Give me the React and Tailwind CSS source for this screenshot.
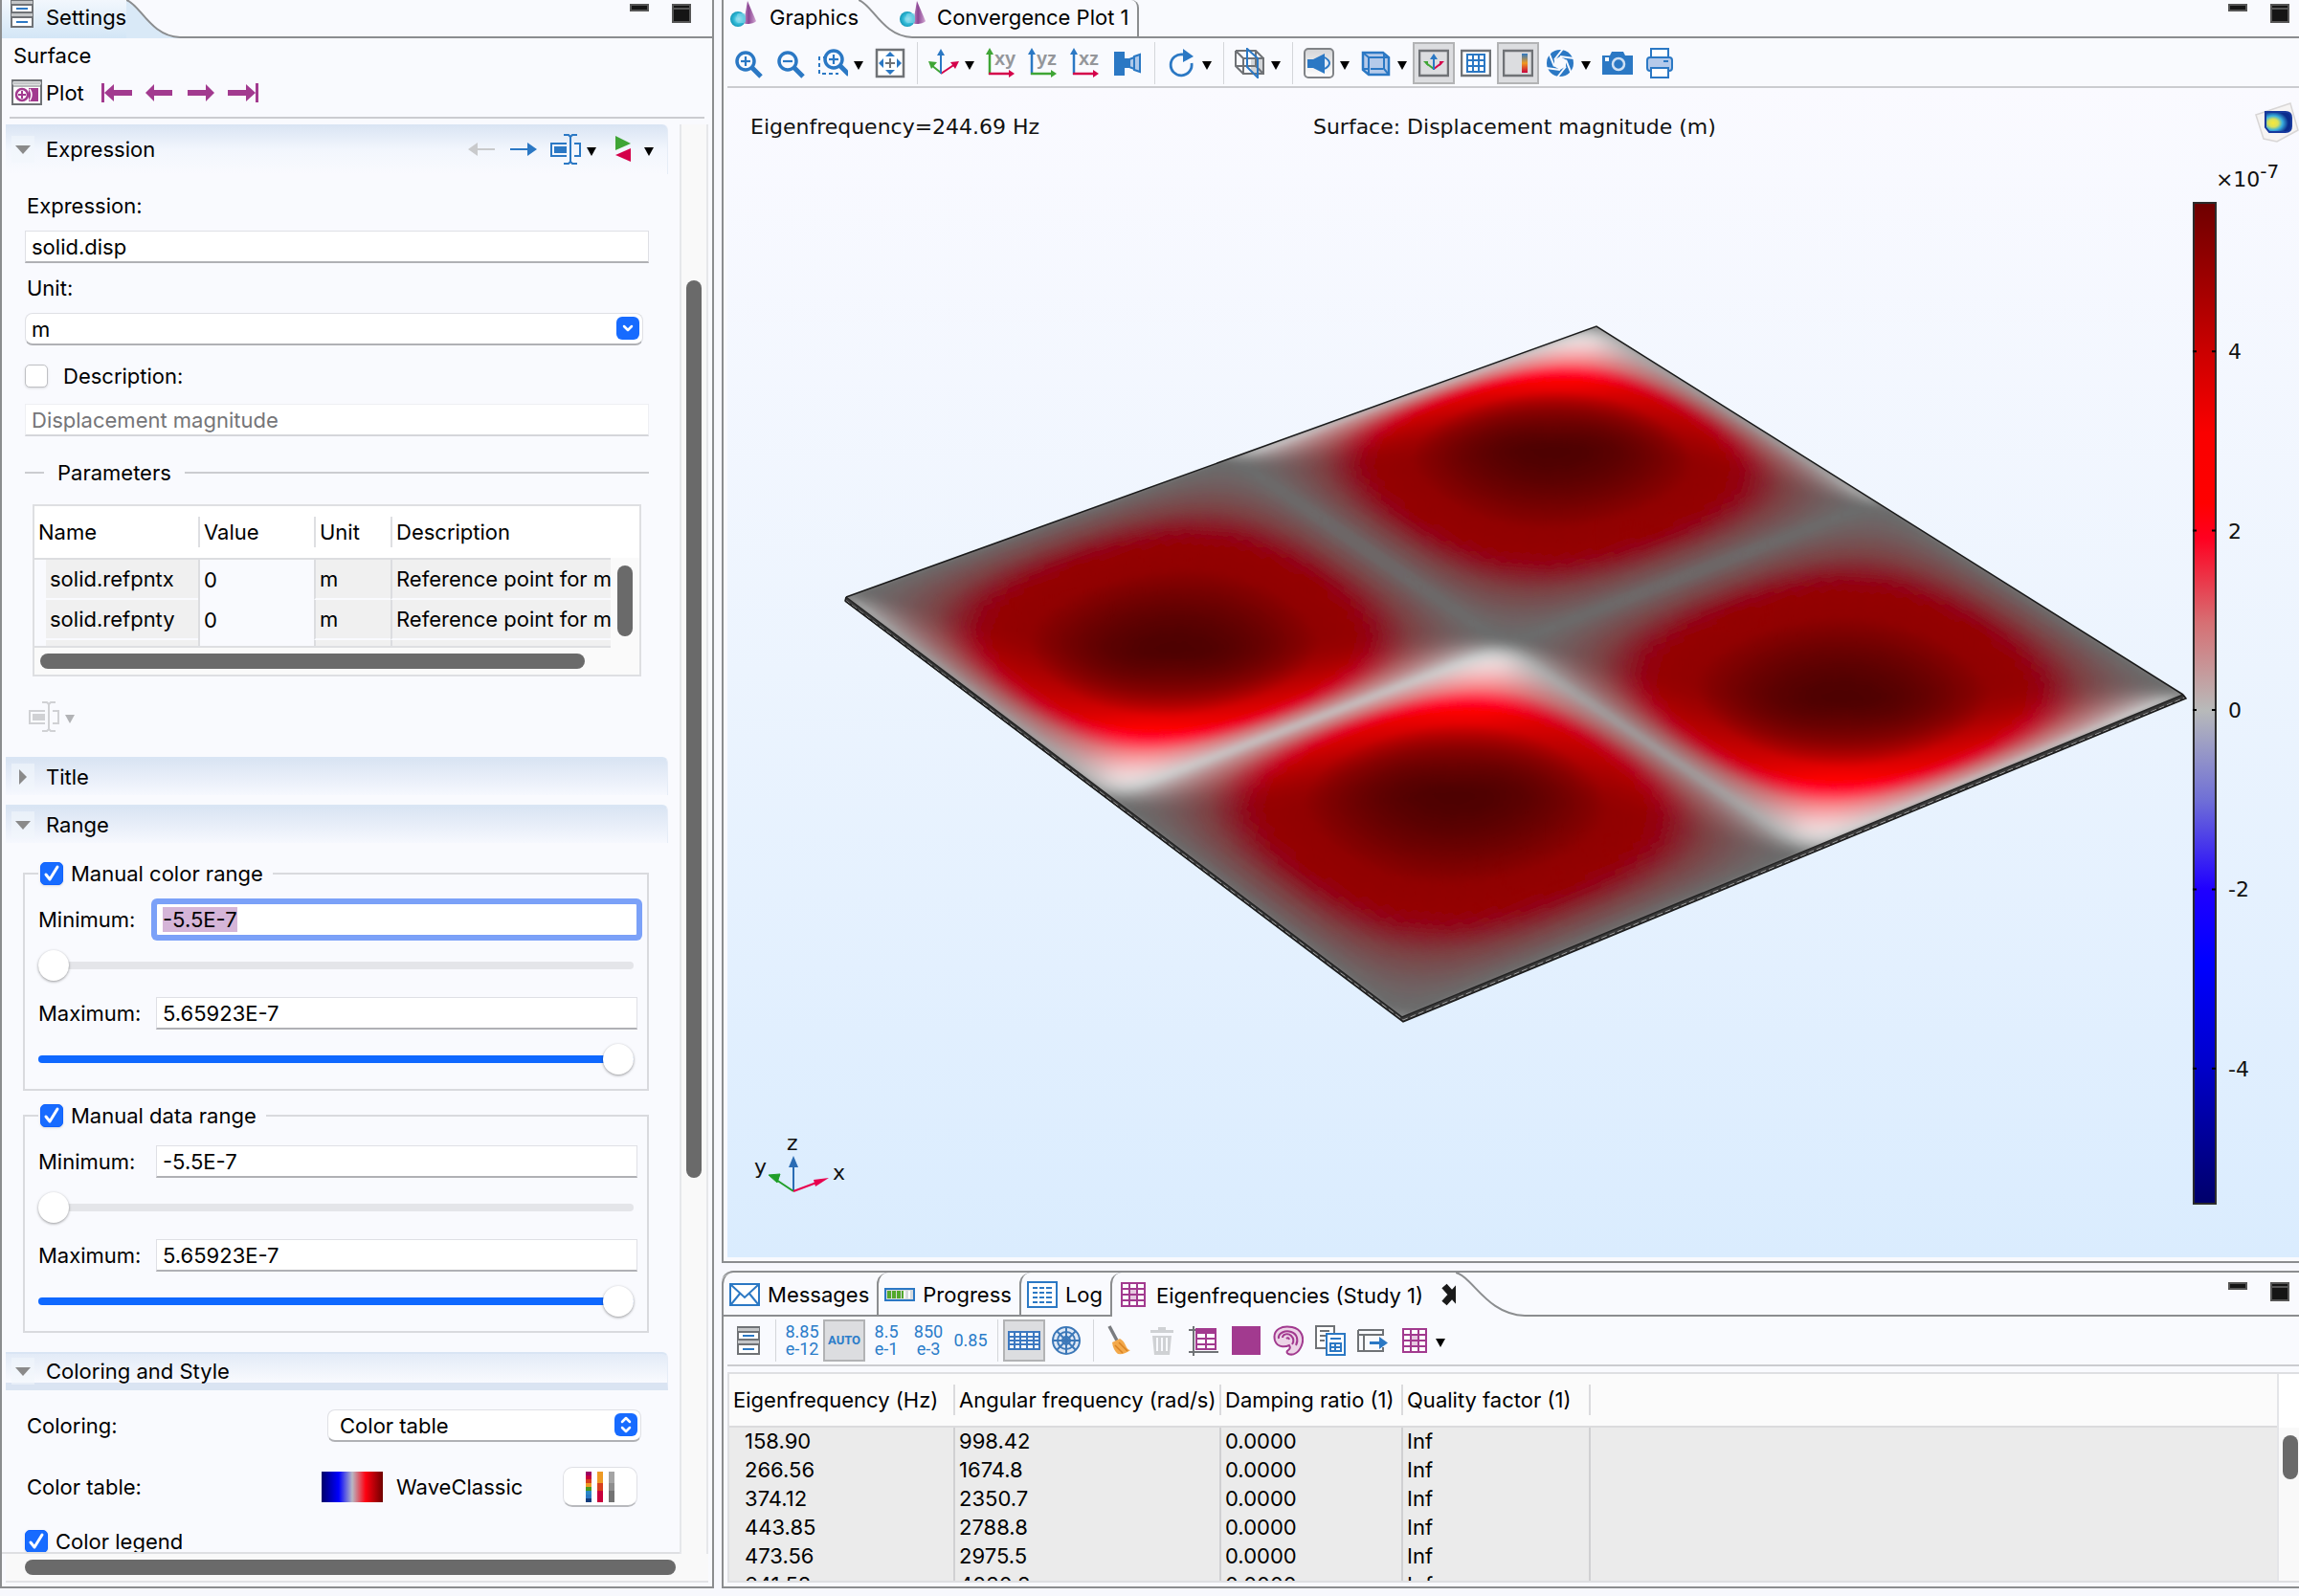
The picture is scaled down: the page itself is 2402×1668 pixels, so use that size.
import { useEffect, useMemo, useRef, useState } from 'react';

const BLUE = '#2b78c4';
const PURPLE = '#a23a8f';
const GREEN = '#3fa535';
const CRIMSON = '#d4004a';
const GRAY = '#6f7276';

function Icon({ w = 32, h = 32, children }) {
  return (
    <svg width={w} height={h} viewBox={`0 0 ${w} ${h}`} fill="none" aria-hidden="true" className="shrink-0">
      {children}
    </svg>
  );
}

/* ---------- shared icons ---------- */

function DrawerIcon() {
  return (
    <Icon w={26} h={32}>
      <rect x="2" y="2" width="22" height="28" fill="#fff" stroke={GRAY} strokeWidth="2" />
      <path d="M2 3h22v4H2zM2 15h22v5H2z" fill="#c4c6c8" />
      <path d="M1 2h24M1 7h24M1 15h24M1 20h24M1 30h24" stroke={GRAY} strokeWidth="2" />
      <path d="M7 11h12M7 25h12" stroke={BLUE} strokeWidth="2" />
    </Icon>
  );
}

function GraphicsIcon() {
  return (
    <Icon w={30} h={30}>
      <defs>
        <linearGradient id="cone" x1="0" x2="1">
          <stop offset="0" stopColor="#c48fc6" />
          <stop offset="0.4" stopColor="#8b4593" />
          <stop offset="1" stopColor="#d3a9d4" />
        </linearGradient>
        <radialGradient id="ball" cx="0.55" cy="0.5" r="0.6">
          <stop offset="0" stopColor="#d5f4fb" />
          <stop offset="0.5" stopColor="#35bcd9" />
          <stop offset="1" stopColor="#0a8eae" />
        </radialGradient>
      </defs>
      <path d="M19 1l9 21c-2 3-11 4-13 2z" fill="url(#cone)" />
      <circle cx="9" cy="20" r="8" fill="url(#ball)" />
      <rect x="8" y="14" width="9" height="10" rx="2" fill="#7fd6e8" opacity="0.7" />
    </Icon>
  );
}

function PlotIcon() {
  return (
    <Icon w={32} h={28}>
      <rect x="1" y="1" width="30" height="25" fill="#fff" stroke={GRAY} strokeWidth="2" />
      <path d="M1 4h30" stroke="#c4c6c8" strokeWidth="3" />
      <path d="M1 7h30" stroke={GRAY} strokeWidth="1" />
      <path d="M18 9h10v14H18z" fill={PURPLE} />
      <circle cx="11" cy="16" r="6" fill="#fff" stroke={PURPLE} strokeWidth="2.5" />
      <path d="M7 16h8M11 12v8" stroke={PURPLE} strokeWidth="2" />
      <path d="M19 10q4 6 0 12" stroke="#fff" strokeWidth="1.5" />
    </Icon>
  );
}

function StepIcon({ flip, bar }) {
  return (
    <Icon w={32} h={20}>
      <g transform={flip ? 'matrix(-1 0 0 1 32 0)' : undefined} fill={PURPLE}>
        <path d={bar ? 'M0 7h20v6H0z' : 'M2 7h20v6H2z'} />
        <path d={bar ? 'M19 1l10 9-10 9z' : 'M21 1l9 9-9 9z'} />
        {bar && <path d="M29 0h3v20h-3z" />}
      </g>
    </Icon>
  );
}

function ThinArrow({ flip, color }) {
  return (
    <Icon w={28} h={20}>
      <g transform={flip ? 'matrix(-1 0 0 1 28 0)' : undefined} fill={color}>
        <path d="M0 9h20v2H0z" />
        <path d="M18 3l10 7-10 7z" />
      </g>
    </Icon>
  );
}

function InsertIcon({ color }) {
  return (
    <Icon>
      <path d="M17 10H1v13h16M25 10h6v13h-6" stroke={color} strokeWidth="2" />
      <path d="M4 13h13v7H4z" fill={color} />
      <path d="M21 2v28M14 1h5l2 2 2-2h5M14 31h5l2-2 2 2h5" stroke={color} strokeWidth="2" />
    </Icon>
  );
}

function SwapIcon() {
  return (
    <Icon w={20} h={28}>
      <path d="M2 0l16 8-16 7z" fill={GREEN} />
      <path d="M18 13v14L2 20z" fill={CRIMSON} />
    </Icon>
  );
}

/* ---------- graphics toolbar icons ---------- */

function Lens({ sign, cx = 12, cy = 12 }) {
  return (
    <g stroke={BLUE}>
      <circle cx={cx} cy={cy} r="9" strokeWidth="3.5" />
      <path d={`M${cx + 7} ${cy + 7}l9 9`} strokeWidth="5" />
      <path d={`M${cx - 5} ${cy}h10`} strokeWidth="2.2" />
      {sign === '+' && <path d={`M${cx} ${cy - 5}v10`} strokeWidth="2.2" />}
    </g>
  );
}

function ZoomBoxIcon() {
  return (
    <Icon>
      <path d="M10 10H2v17h20" stroke={BLUE} strokeWidth="2" strokeDasharray="4 3" />
      <Lens sign="+" cx={17} cy={12} />
    </Icon>
  );
}

function ExtentsIcon() {
  return (
    <Icon>
      <rect x="2" y="2" width="28" height="28" fill="#fff" stroke={GRAY} strokeWidth="2.5" />
      <path d="M11 16h10M16 11v10" stroke={GRAY} strokeWidth="2" />
      <path d="M16 4l5 5H11zM16 28l5-5H11zM4 16l5-5v10zM28 16l-5-5v10z" fill={BLUE} />
    </Icon>
  );
}

function AxesIcon() {
  return (
    <Icon w={34} h={30}>
      <path d="M14 25L4 17" stroke={GREEN} strokeWidth="2" />
      <path d="M1 13l9 1-6 7z" fill={GREEN} />
      <path d="M14 26l15-10" stroke={CRIMSON} strokeWidth="2" />
      <path d="M33 13l-9 1 5 7z" fill={CRIMSON} />
      <path d="M14 26V5" stroke={BLUE} strokeWidth="2" />
      <path d="M14 0l4 7h-8z" fill={BLUE} />
    </Icon>
  );
}

function PlaneIcon({ label, up, right }) {
  return (
    <Icon>
      <path d="M4 28V4" stroke={up} strokeWidth="2.5" />
      <path d="M4 0l4 7H0z" fill={up} />
      <path d="M3 27h23" stroke={right} strokeWidth="2.5" />
      <path d="M30 27l-6-4v8z" fill={right} />
      <text x="9" y="18" fontSize="20" fontWeight="700" fontFamily="Liberation Sans, sans-serif" fill="#94969a">
        {label}
      </text>
    </Icon>
  );
}

function TorchIcon() {
  return (
    <Icon>
      <path d="M2 4h11v25H2z" fill={BLUE} />
      <path d="M13 11h5v10h-5z" fill={BLUE} />
      <path d="M18 12l5-2v12l-5-2z" fill="#aec8ea" stroke={BLUE} strokeWidth="2" />
      <path d="M23 9l6-2v18l-6-2z" fill="#aec8ea" stroke={BLUE} strokeWidth="2" />
    </Icon>
  );
}

function RotateIcon() {
  return (
    <Icon>
      <path d="M18 7a11 11 0 1 0 9 9" stroke={BLUE} strokeWidth="2.8" />
      <path d="M18 1l11 8-11 6z" fill={BLUE} />
    </Icon>
  );
}

function WireCubeIcon() {
  return (
    <Icon>
      <path d="M17 12h12v15H17z" fill="#d3d5d8" />
      <path d="M9 11h21v16H9zM1 3h21l8 8M1 3v16l8 8M1 3l8 8M1 19h21M22 3v16l8 8" stroke={GRAY} strokeWidth="2" />
      <path d="M13 1l11 10v20L13 20z" stroke={BLUE} strokeWidth="2" />
    </Icon>
  );
}

function LightIcon() {
  return (
    <Icon>
      <defs>
        <linearGradient id="lightBg" x1="0" x2="0" y1="0" y2="1">
          <stop offset="0" stopColor="#d4d5d7" />
          <stop offset="1" stopColor="#fff" />
        </linearGradient>
      </defs>
      <rect x="1" y="1" width="30" height="30" rx="4" fill="url(#lightBg)" stroke="#808387" strokeWidth="2" />
      <path d="M4 12h6L22 6v21l-12-6H4z" fill={BLUE} />
      <path d="M22 10q10 6 0 12" stroke={BLUE} strokeWidth="2" fill="#e4ecf7" />
    </Icon>
  );
}

function BoxIcon() {
  return (
    <Icon>
      <path d="M2 5h21l6 5v18H8l-6-5z" fill="#b5caea" stroke={BLUE} strokeWidth="2.5" />
      <path d="M8 10h21M8 10v18M2 5l6 5M2 22h5M24 6v16l5 6M10 22h13" stroke={BLUE} strokeWidth="2" />
    </Icon>
  );
}

function AxesViewIcon() {
  return (
    <Icon>
      <rect x="1" y="3" width="30" height="26" stroke={GRAY} strokeWidth="2.5" />
      <path d="M16 22l-8-6" stroke={GREEN} strokeWidth="2" />
      <path d="M5 14h5v5z" fill={GREEN} />
      <path d="M16 22l8-6" stroke={CRIMSON} strokeWidth="2" />
      <path d="M27 14h-5v5z" fill={CRIMSON} />
      <path d="M16 23V10" stroke={BLUE} strokeWidth="2" />
      <path d="M16 6l4 6h-8z" fill={BLUE} />
    </Icon>
  );
}

function GridViewIcon() {
  return (
    <Icon>
      <rect x="1" y="3" width="30" height="26" fill="#fff" stroke={GRAY} strokeWidth="2.5" />
      <path d="M7 7h18v18H7zM7 13h18M7 19h18M13 7v18M19 7v18" stroke={BLUE} strokeWidth="2" />
    </Icon>
  );
}

function LegendViewIcon() {
  return (
    <Icon>
      <defs>
        <linearGradient id="miniLegend" x1="0" x2="0" y1="0" y2="1">
          <stop offset="0" stopColor="#2b78c4" />
          <stop offset="0.5" stopColor="#f09a1e" />
          <stop offset="1" stopColor="#c8003c" />
        </linearGradient>
      </defs>
      <rect x="1" y="3" width="30" height="26" stroke={GRAY} strokeWidth="2.5" />
      <rect x="20" y="6" width="6" height="20" fill="url(#miniLegend)" />
    </Icon>
  );
}

function ApertureIcon() {
  const blades = [0, 60, 120, 180, 240, 300];
  return (
    <Icon>
      <circle cx="16" cy="16" r="14" fill={BLUE} />
      <path d="M16 9l6 3.500v7L16 23l-6-3.500v-7z" fill="#f9fafe" />
      {blades.map((a) => (
        <path key={a} d="M10 12.500L19 1" stroke="#f9fafe" strokeWidth="2" transform={`rotate(${a} 16 16)`} />
      ))}
    </Icon>
  );
}

function CameraIcon() {
  return (
    <Icon>
      <path d="M0 8h8l2-4h12l2 4h8v20H0z" fill={BLUE} />
      <circle cx="17" cy="17" r="6" stroke="#cfe0f3" strokeWidth="2.5" />
      <path d="M3 10h4v4H3z" fill="#fff" />
    </Icon>
  );
}

function PrinterIcon() {
  return (
    <Icon>
      <path d="M7 10V1h18v9" fill="#fff" stroke={BLUE} strokeWidth="2" />
      <rect x="3" y="10" width="26" height="14" rx="3" fill="#b5caea" stroke={BLUE} strokeWidth="2" />
      <path d="M7 21h18v10H7z" fill="#fff" stroke={BLUE} strokeWidth="2" />
      <path d="M20 14h5" stroke={BLUE} strokeWidth="2" />
    </Icon>
  );
}

/* ---------- table toolbar icons ---------- */

function PurpleTable({ h = 28 }) {
  return (
    <Icon w={28} h={h}>
      <rect x="1" y="1" width="26" height={h - 2} fill={PURPLE} />
      {[0, 1, 2, 3].map((r) =>
        [0, 1, 2].map((c) => (
          <rect key={`${r}${c}`} x={3 + c * 8} y={3 + r * 6} width="6" height="4" fill={c === 1 && r > 0 && r < 3 ? '#e6c8e0' : '#fff'} />
        ))
      )}
    </Icon>
  );
}

function EnvelopeIcon() {
  return (
    <Icon w={32} h={24}>
      <path d="M1 1h30v22H1z" fill="#fff" stroke={BLUE} strokeWidth="2" />
      <path d="M2 2l14 13L30 2M2 22l9-11M30 22l-9-11" stroke={BLUE} strokeWidth="2" />
    </Icon>
  );
}

function ProgressIcon() {
  return (
    <Icon w={32} h={14}>
      <rect x="1" y="1" width="30" height="12" fill="#d7dadd" stroke={BLUE} strokeWidth="2" />
      <path d="M3 3h4v8H3zM8 3h4v8H8zM13 3h4v8h-4zM18 3h2v8h-2z" fill="#52a82c" />
      <path d="M21 3v8M26 3v8" stroke="#fff" strokeWidth="2" />
    </Icon>
  );
}

function LogIcon() {
  return (
    <Icon w={32} h={28}>
      <rect x="1" y="1" width="30" height="26" fill="#fff" stroke={BLUE} strokeWidth="2" />
      <path d="M6 7h5M13 7h5M20 7h6M6 12h5M13 12h5M20 12h6M6 17h5M13 17h5M20 17h6M6 22h5M13 22h5M20 22h6" stroke={BLUE} strokeWidth="2" />
    </Icon>
  );
}

function SheetIcon() {
  return (
    <Icon w={34} h={20}>
      <rect x="1" y="1" width="32" height="18" fill="#fff" stroke="#3c78c0" strokeWidth="2" />
      <path d="M1 6h32M1 10h32M1 14h32M7 1v18M13 1v18M20 1v18M27 1v18" stroke="#3c78c0" strokeWidth="2" />
    </Icon>
  );
}

function PolarIcon() {
  return (
    <Icon>
      <g stroke="#3c78b8" strokeWidth="2">
        <circle cx="16" cy="16" r="14" fill="#dfe9f6" />
        <circle cx="16" cy="16" r="9" />
        <circle cx="16" cy="16" r="4" />
        <path d="M16 2v28M2 16h28M6 6l20 20M26 6L6 26" />
      </g>
    </Icon>
  );
}

function BroomIcon() {
  return (
    <Icon>
      <path d="M5 1l8 15" stroke="#7a7c80" strokeWidth="3.500" />
      <path d="M8 18l8-4q4 2 6 7 2 5 5 5-6 5-13 4-5-4-6-12z" fill="#f3a94b" />
      <path d="M11 21l8 8M15 18l9 9" stroke="#d98224" strokeWidth="1.500" />
    </Icon>
  );
}

function TrashIcon() {
  return (
    <Icon>
      <path d="M4 5h24v3H4zM12 2h8v3h-8zM6 11h20l-2 20H8z" fill="#cfd1d4" />
      <path d="M11 13v14M16 13v14M21 13v14" stroke="#f9fafe" strokeWidth="2" />
    </Icon>
  );
}

function TablePlotIcon() {
  return (
    <Icon>
      <path d="M5 1v31M0 28h31M0 5h8" stroke={GRAY} strokeWidth="2" />
      <path d="M7 3h22v23H7z" fill={PURPLE} />
      <path d="M9 9h8v4H9zM19 9h8v4h-8zM9 15h8v4H9zM19 15h8v4h-8zM9 21h8v3H9zM19 21h8v3h-8z" fill="#fff" />
    </Icon>
  );
}

function SwirlIcon() {
  return (
    <Icon>
      <path d="M2 16C-1 4 10 0 20 2s13 11 10 19-9 11-14 9q-3-2 0-4 3-2 1-5c-2 1-12 4-15-5z" fill="#ecd4e7" stroke={PURPLE} strokeWidth="2" />
      <path d="M6 14c-1-6 7-9 13-7s8 8 5 14M10 13c0-4 6-5 9-2s3 6 1 9M14 14q2-2 3 1" stroke={PURPLE} strokeWidth="2" />
    </Icon>
  );
}

function CopyTableIcon() {
  return (
    <Icon>
      <path d="M1 1h19v23H1z" fill="#fff" stroke={GRAY} strokeWidth="2" />
      <path d="M5 6h10M5 11h6M5 16h5" stroke={GRAY} strokeWidth="2" />
      <path d="M12 9h19v22H12z" fill="#fff" stroke={BLUE} strokeWidth="2" />
      <path d="M16 14h11" stroke={BLUE} strokeWidth="2" />
      <path d="M16 19h11v8H16zM16 23h11M21 19v8" stroke={BLUE} strokeWidth="2" />
    </Icon>
  );
}

function ExportIcon() {
  return (
    <Icon>
      <path d="M28 5H1M28 10H1M1 5v22h27M7 10v17M27 5v6M27 23v5" stroke={GRAY} strokeWidth="2" />
      <path d="M13 17h11v3H13z" fill={BLUE} />
      <path d="M23 12l9 6.500-9 6.500z" fill={BLUE} />
    </Icon>
  );
}

/* ---------- toolbar pieces ---------- */

function ToolButton({ label, pressed, children }) {
  return (
    <button
      type="button"
      aria-label={label}
      aria-pressed={pressed}
      className={
        pressed
          ? 'flex h-11 w-11 items-center justify-center border-2 border-[#b2b3b5] bg-[#dcdde0]'
          : 'flex h-11 w-11 items-center justify-center'
      }
    >
      {children}
    </button>
  );
}

function MenuArrow({ label, color = '#000' }) {
  return (
    <button type="button" aria-label={label} className="flex h-11 w-4 items-center">
      <svg width="10" height="9" viewBox="0 0 10 9" aria-hidden="true" className="mt-1">
        <path d="M0 0h10L5 9z" fill={color} />
      </svg>
    </button>
  );
}

function Divider() {
  return (
    <div className="flex h-11 w-3 justify-center">
      <div className="w-px bg-[#d4d6da]" />
    </div>
  );
}

function WindowButtons() {
  return (
    <div className="flex items-start gap-6 pt-1">
      <button type="button" aria-label="Minimize" className="h-2 w-5 border-2 border-[#555] bg-[#151515]" />
      <button type="button" aria-label="Maximize" className="flex h-5 w-5 border-2 border-[#555] bg-[#151515] pt-0.5">
        <span className="h-0.5 w-full bg-[#555]" />
      </button>
    </div>
  );
}

function TabCurve({ fill, h = 40, w = 56 }) {
  const d = `M0 0C${w * 0.25} ${h * 0.1} ${w * 0.45} ${h * 0.95} ${w} ${h - 1}`;
  return (
    <svg width={w} height={h} viewBox={`0 0 ${w} ${h}`} fill="none" className="shrink-0" aria-hidden="true">
      <path d={`${d}V${h}H0z`} fill={fill} />
      <path d={d} stroke="#8b8d8f" strokeWidth="2" />
    </svg>
  );
}

/* ---------- form pieces ---------- */

function Check({ id, defaultChecked }) {
  return (
    <span className="relative inline-flex h-6 w-6 shrink-0">
      <input
        id={id}
        type="checkbox"
        defaultChecked={defaultChecked}
        className="peer h-6 w-6 appearance-none rounded-[5px] border border-[#bfc0c4] bg-white shadow-sm checked:border-[#0f62fe] checked:bg-[#176bff]"
      />
      <svg viewBox="0 0 24 24" fill="none" className="pointer-events-none absolute inset-0 hidden peer-checked:block" aria-hidden="true">
        <path d="M6 13l4 5 8-13" stroke="#fff" strokeWidth="3" strokeLinecap="round" strokeLinejoin="round" />
      </svg>
    </span>
  );
}

function SectionHeader({ title, open = true, tall, band, children }) {
  return (
    <div
      className={
        tall
          ? 'mr-3 ml-1 flex h-[52px] items-center rounded-tr-md border-r border-[#e6edf7] bg-linear-to-b from-[#d9e4f3] via-[#f2f6fd] to-[#f9fafe] pl-1.5'
          : band
            ? 'mr-3 ml-1 flex h-10 items-center rounded-tr-md border-t-2 border-r border-b-8 border-t-[#d9e5f4] border-r-[#e6edf7] border-b-[#dae4f2] bg-linear-to-b from-[#e3ebf7] to-[#f9fafe] pt-1.5 pl-1.5'
            : 'mr-3 ml-1 flex h-10 items-center rounded-tr-md border-t-2 border-r border-t-[#d9e5f4] border-r-[#e6edf7] bg-linear-to-b from-[#d9e4f3] to-[#f6f8fe] pl-1.5'
      }
    >
      <button type="button" aria-expanded={open} className="flex items-center">
        <span className="flex h-7 w-6 items-center justify-center bg-[#f2f6fc]/60">
          <svg width="16" height="16" viewBox="0 0 16 16" aria-hidden="true">
            <path d={open ? 'M0 4h16l-8 9z' : 'M4 0l8 8-8 8z'} fill="#8a8a8a" />
          </svg>
        </span>
        <span className="pl-3">{title}</span>
      </button>
      {children}
    </div>
  );
}

const inputClass =
  'h-[34px] w-full border border-b-2 border-[#dfe0e5] border-b-[#b0b1b5] bg-white px-1.5 outline-none placeholder:text-[#757578]';

function RangeRow({ id, label, value, full, selected }) {
  const ref = useRef(null);

  useEffect(() => {
    if (selected) {
      ref.current.focus();
      ref.current.select();
    }
  }, [selected]);

  return (
    <>
      <div className="flex h-[34px] items-center">
        <label htmlFor={id} className="w-[123px] shrink-0">
          {label}
        </label>
        <input
          id={id}
          ref={ref}
          defaultValue={value}
          className={
            selected
              ? 'h-[34px] w-full rounded-xs border border-[#7aa0f7] bg-white px-1.5 outline-none ring-[5px] ring-[#7ba1f8] selection:bg-[#d5b5d8] selection:text-black'
              : inputClass
          }
        />
      </div>
      <input
        type="range"
        aria-label={`${label} slider`}
        min="0"
        max="100"
        defaultValue={full ? 100 : 0}
        className={
          full
            ? 'my-[15px] block h-8 w-[calc(100%-4px)] appearance-none bg-transparent [&::-webkit-slider-runnable-track]:h-2 [&::-webkit-slider-runnable-track]:rounded-full [&::-webkit-slider-runnable-track]:bg-[#0f68ff] [&::-webkit-slider-thumb]:-mt-3 [&::-webkit-slider-thumb]:h-8 [&::-webkit-slider-thumb]:w-8 [&::-webkit-slider-thumb]:appearance-none [&::-webkit-slider-thumb]:rounded-full [&::-webkit-slider-thumb]:bg-white [&::-webkit-slider-thumb]:shadow-[0_1px_3px_#00000066]'
            : 'mt-[15px] mb-[17px] block h-8 w-[calc(100%-4px)] appearance-none bg-transparent [&::-webkit-slider-runnable-track]:h-2 [&::-webkit-slider-runnable-track]:rounded-full [&::-webkit-slider-runnable-track]:bg-[#e4e5e9] [&::-webkit-slider-thumb]:-mt-3 [&::-webkit-slider-thumb]:h-8 [&::-webkit-slider-thumb]:w-8 [&::-webkit-slider-thumb]:appearance-none [&::-webkit-slider-thumb]:rounded-full [&::-webkit-slider-thumb]:bg-white [&::-webkit-slider-thumb]:shadow-[0_1px_3px_#00000066]'
        }
      />
    </>
  );
}

function RangeGroup({ id, title, selected }) {
  return (
    <fieldset className="mt-[13px] border-2 border-[#d9dade] pt-[18px] pr-2.5 pl-3.5">
      <legend className="flex h-[26px] items-center gap-2 pr-2.5 pl-0.5">
        <Check id={id} defaultChecked />
        <label htmlFor={id}>{title}</label>
      </legend>
      <RangeRow id={`${id}-min`} label="Minimum:" value="-5.5E-7" selected={selected} />
      <RangeRow id={`${id}-max`} label="Maximum:" value="5.65923E-7" full />
    </fieldset>
  );
}

function ParameterTable() {
  const rows = ['solid.refpntx', 'solid.refpnty', ''];
  const cell = 'border-b-2 border-l-2 border-b-[#f9fafe] border-l-[#dcdde0] p-0 pl-1 whitespace-nowrap';
  return (
    <div className="mr-2 ml-2 mt-5 flex h-[180px] flex-col overflow-hidden border-2 border-[#dedfe2] bg-[#fafafa]">
      <div className="flex h-[148px] shrink-0">
        <div className="min-w-0 flex-1 overflow-hidden border-b-2 border-[#dedfe2]">
          <table className="w-full table-fixed border-separate border-spacing-0 text-left">
            <colgroup>
              <col className="w-[171px]" />
              <col className="w-[121px]" />
              <col className="w-[80px]" />
              <col />
            </colgroup>
            <thead>
              <tr className="h-14 bg-white">
                {['Name', 'Value', 'Unit', 'Description'].map((h, i) => (
                  <th key={h} scope="col" className="border-b-2 border-[#dcdde0] p-0 font-normal">
                    <div className={i ? 'flex h-8 items-center border-l-2 border-[#dedfe2] pl-1' : 'flex h-8 items-center pl-1'}>{h}</div>
                  </th>
                ))}
              </tr>
            </thead>
            <tbody>
              {rows.map((name) => (
                <tr key={name} className="h-[42px] bg-[#f0f0f0]">
                  <td className="border-b-2 border-l-[12px] border-[#f9fafe] p-0 pl-1">{name}</td>
                  <td className="border-l-2 border-[#dcdde0] bg-[#f9fafe] p-0 pl-1">{name && '0'}</td>
                  <td className={cell}>{name && 'm'}</td>
                  <td className={cell}>{name && 'Reference point for m'}</td>
                </tr>
              ))}
            </tbody>
          </table>
        </div>
        <div className="w-[30px] shrink-0 bg-[#fafafa]">
          <div className="h-[54px] bg-white" />
          <div className="mx-auto mt-2 h-[74px] w-4 rounded-full bg-[#6a6a6a]" />
        </div>
      </div>
      <div className="mt-1.5 ml-1.5 h-4 w-[90%] shrink-0 rounded-full bg-[#6a6a6a]" />
    </div>
  );
}

function SettingsPanel() {
  return (
    <aside className="mb-2 flex w-[31.06%] shrink-0 flex-col border-r-2 border-b-2 border-l-2 border-[#8b8d8f] bg-[#f9fafe]">
      <div className="flex h-10 shrink-0 justify-between border-b-2 border-[#8b8d8f] pr-[22px]">
        <div className="flex">
          <div className="-mb-0.5 flex h-10 items-start gap-3 bg-linear-to-b from-[#f2f7fd] to-[#d3e6f6] pl-2">
            <span className="-mt-0.5"><DrawerIcon /></span>
            <h1 className="leading-9">Settings</h1>
          </div>
          <TabCurve fill="#d9e9f7" />
        </div>
        <WindowButtons />
      </div>

      <h2 className="shrink-0 pl-3 leading-9">Surface</h2>
      <div className="mx-2 flex h-12 shrink-0 items-center border-b-2 border-[#cbccd0] pb-1">
        <button type="button" className="flex items-center gap-1 pl-0.5">
          <PlotIcon />
          Plot
        </button>
        <div className="ml-3 flex">
          <ToolButton label="Plot First"><StepIcon flip bar /></ToolButton>
          <ToolButton label="Plot Previous"><StepIcon flip /></ToolButton>
          <ToolButton label="Plot Next"><StepIcon /></ToolButton>
          <ToolButton label="Plot Last"><StepIcon bar /></ToolButton>
        </div>
      </div>

      <div className="mt-1.5 flex min-h-0 flex-1">
        <div className="min-w-0 flex-1 overflow-hidden border-b-2 border-[#dedfe2]">
          <SectionHeader title="Expression" tall>
            <div className="ml-auto flex pr-2">
              <ToolButton label="Previous expression"><ThinArrow flip color="#c9cacc" /></ToolButton>
              <ToolButton label="Next expression"><ThinArrow color={BLUE} /></ToolButton>
              <ToolButton label="Insert expression"><InsertIcon color={BLUE} /></ToolButton>
              <MenuArrow label="Insert expression menu" />
              <ToolButton label="Replace expression"><SwapIcon /></ToolButton>
              <MenuArrow label="Replace expression menu" />
            </div>
          </SectionHeader>

          <div className="pt-5 pr-8 pl-6">
            <label htmlFor="expression" className="block pl-0.5 leading-[26px]">Expression:</label>
            <input id="expression" defaultValue="solid.disp" className={`${inputClass} mt-[13px]`} />
            <label htmlFor="unit" className="mt-[13px] block pl-0.5 leading-[26px]">Unit:</label>
            <div className="relative mt-[13px] mr-1.5">
              <select id="unit" className="block h-[34px] w-full appearance-none rounded-lg border border-b-2 border-[#dfe0e5] border-b-[#b0b1b5] bg-white px-1.5">
                <option>m</option>
              </select>
              <svg width="24" height="24" viewBox="0 0 24 24" fill="none" className="pointer-events-none absolute top-1 right-1" aria-hidden="true">
                <rect width="24" height="24" rx="6" fill="#176bff" />
                <path d="M8 10l4 4 4-4" stroke="#fff" strokeWidth="2.500" strokeLinecap="round" strokeLinejoin="round" />
              </svg>
            </div>
            <div className="mt-5 flex h-6 items-center gap-4">
              <Check id="use-description" />
              <label htmlFor="use-description">Description:</label>
            </div>
            <input
              aria-label="Description text"
              placeholder="Displacement magnitude"
              disabled
              className="mt-[17px] h-[34px] w-full border border-b-2 border-[#eeeff3] border-b-[#d5d6da] bg-white px-1.5 placeholder:text-[#757578]"
            />
            <div className="mt-[25px] flex h-[26px] items-center">
              <div className="h-0.5 w-5 bg-[#cbccd0]" />
              <h3 className="px-3.5">Parameters</h3>
              <div className="h-0.5 flex-1 bg-[#cbccd0]" />
            </div>
            <ParameterTable />
            <div className="mt-5 flex h-11 items-center gap-1.5 pl-1">
              <InsertIcon color="#d0d1d4" />
              <MenuArrow label="Insert parameter" color="#b2b3b6" />
            </div>
          </div>

          <div className="mt-5">
            <SectionHeader title="Title" open={false} />
          </div>
          <div className="mt-2.5">
            <SectionHeader title="Range" />
          </div>
          <div className="pt-1.5 pr-8 pl-[22px]">
            <RangeGroup id="color-range" title="Manual color range" selected />
            <RangeGroup id="data-range" title="Manual data range" />
          </div>

          <div className="mt-5">
            <SectionHeader title="Coloring and Style" band />
          </div>
          <div className="pt-5 pr-8 pl-6">
            <div className="flex h-[34px] items-center pl-0.5">
              <label htmlFor="coloring" className="flex-1">Coloring:</label>
              <div className="relative mr-2 w-[328px]">
                <select id="coloring" className="block h-[34px] w-full appearance-none rounded-lg border border-b-2 border-[#dfe0e5] border-b-[#b0b1b5] bg-white px-3">
                  <option>Color table</option>
                </select>
                <svg width="24" height="24" viewBox="0 0 24 24" fill="none" className="pointer-events-none absolute top-1 right-1" aria-hidden="true">
                  <rect width="24" height="24" rx="6" fill="#176bff" />
                  <path d="M8 9l4-4 4 4M8 15l4 4 4-4" stroke="#fff" strokeWidth="2.500" strokeLinecap="round" strokeLinejoin="round" />
                </svg>
              </div>
            </div>
            <div className="mt-[26px] flex h-[42px] items-center pr-3 pl-0.5">
              <span className="flex-1">Color table:</span>
              <div className="h-8 w-16 bg-[linear-gradient(90deg,#00006a,#0000ff_28%,#b8b8c4_50%,#ff0010_72%,#6e0000)]" />
              <span className="w-[188px] pl-3.5">WaveClassic</span>
              <button type="button" aria-label="Select color table" className="flex h-[42px] w-[78px] items-center justify-center rounded-[10px] border border-b-2 border-[#dfe0e5] border-b-[#b8b9bd] bg-white">
                <Icon w={30} h={32}>
                  {['#9c0062', '#c8003c', '#d8401e', '#ee9a24', '#4a9a1e', '#2b88c4', '#2b78c4', '#123c7c'].map((c, i) => (
                    <rect key={c} x="0" y={i * 4} width="6" height="4" fill={c} />
                  ))}
                  <path d="M12 0h6v12h-6z" fill="#ee9a24" />
                  <path d="M12 12h6v8h-6z" fill="#d8401e" />
                  <path d="M12 20h6v12h-6z" fill="#c8003c" />
                  <path d="M24 0h6v12h-6z" fill="#a4a4a4" />
                  <path d="M24 12h6v8h-6z" fill="#8e8e8e" />
                  <path d="M24 20h6v12h-6z" fill="#737373" />
                </Icon>
              </button>
            </div>
            <div className="mt-6 flex h-6 items-center gap-2">
              <Check id="legend" defaultChecked />
              <label htmlFor="legend">Color legend</label>
            </div>
          </div>
        </div>

        <div className="mr-1 w-[30px] shrink-0 border-r-2 border-l-2 border-[#e6e7ea] bg-[#f9f9f9] pt-[163px]">
          <div className="mx-auto h-[938px] w-4 rounded-full bg-[#6a6a6a]" />
        </div>
      </div>
      <div className="mr-1 mb-1 ml-1 h-[30px] shrink-0 border-b-2 border-[#e2e3e6] bg-[#f9f9f9] px-5 py-1.5">
        <div className="h-4 w-[98%] rounded-full bg-[#6a6a6a]" />
      </div>
    </aside>
  );
}

/* ---------- surface plot ---------- */

const CORNERS = { left: [884, 624], top: [1668, 341], right: [2281, 726], bottom: [1465, 1063] };

const COLOR_STOPS = [
  [0, 184, 186, 186],
  [1, 214, 112, 116],
  [2, 255, 0, 32],
  [2.4, 255, 0, 0],
  [3.2, 250, 0, 0],
  [4, 204, 0, 0],
  [5.66, 110, 0, 0],
];

function colorAt(value) {
  let i = 1;
  while (i < COLOR_STOPS.length - 1 && value > COLOR_STOPS[i][0]) i += 1;
  const a = COLOR_STOPS[i - 1];
  const b = COLOR_STOPS[i];
  const t = Math.min(1, (value - a[0]) / (b[0] - a[0]));
  return [1, 2, 3].map((k) => a[k] + (b[k] - a[k]) * t);
}

// square-to-quad projective map, (u, v) with u: left->top and v: left->bottom
function makeProjection({ left, top, right, bottom }) {
  const dx1 = top[0] - right[0];
  const dx2 = bottom[0] - right[0];
  const sx = left[0] - top[0] + right[0] - bottom[0];
  const dy1 = top[1] - right[1];
  const dy2 = bottom[1] - right[1];
  const sy = left[1] - top[1] + right[1] - bottom[1];
  const det = dx1 * dy2 - dx2 * dy1;
  const g = (sx * dy2 - dx2 * sy) / det;
  const h = (dx1 * sy - sx * dy1) / det;
  return (u, v) => {
    const w = g * u + h * v + 1;
    return [
      ((top[0] - left[0] + g * top[0]) * u + (bottom[0] - left[0] + h * bottom[0]) * v + left[0]) / w,
      ((top[1] - left[1] + g * top[1]) * u + (bottom[1] - left[1] + h * bottom[1]) * v + left[1]) / w,
    ];
  };
}

const TAU = Math.PI * 2;
const DEFORMATION = 36;
const SLOPE = 4;
const LIGHT = [0.52, -0.72, 0.46];

// (2,2) plate mode
function deflection(u, v) {
  return Math.sin(TAU * u) * Math.sin(TAU * v);
}

// one directional light, damped towards the peaks
function shade(u, v) {
  const w = Math.abs(deflection(u, v));
  const wu = SLOPE * Math.cos(TAU * u) * Math.sin(TAU * v);
  const wv = SLOPE * Math.sin(TAU * u) * Math.cos(TAU * v);
  const lit = Math.max(0, (LIGHT[0] * wu + LIGHT[1] * wv + LIGHT[2]) / Math.sqrt(1 + wu * wu + wv * wv));
  const k = 0.58 + 0.74 * lit * lit * (1 - 0.8 * w ** 0.8);
  const rgb = colorAt(w * 5.3).map((c) => Math.min(255, Math.round(c * k)));
  return `rgb(${rgb.join(',')})`;
}

function PlateSurface() {
  const cells = useMemo(() => {
    const n = 120;
    const at = makeProjection(CORNERS);
    const out = [];
    for (let j = 0; j < n; j += 1) {
      for (let i = 0; i < n; i += 1) {
        const pts = [[i, j], [i + 1, j], [i + 1, j + 1], [i, j + 1]].map(([a, b]) => {
          const [x, y] = at(a / n, b / n);
          return `${x.toFixed(1)},${(y + DEFORMATION * deflection(a / n, b / n)).toFixed(1)}`;
        });
        out.push({ d: `M${pts.join('L')}z`, fill: shade((i + 0.5) / n, (j + 0.5) / n) });
      }
    }
    return out;
  }, []);

  return (
    <g>
      <clipPath id="plate">
        <path d="M884 624L1668 341L2281 726L1465 1063z" />
      </clipPath>
      <filter id="smooth" x="-5%" y="-5%" width="110%" height="110%">
        <feGaussianBlur stdDeviation="2" />
      </filter>
      <path d="M884 624L1465 1063L2281 726L2284 730L1466 1068L883 629z" fill="#3a3a3a" />
      <g clipPath="url(#plate)">
        <path d="M884 624L1668 341L2281 726L1465 1063z" fill="#888" />
        <g filter="url(#smooth)">
          {cells.map((c) => (
            <path key={c.d} d={c.d} fill={c.fill} stroke={c.fill} />
          ))}
        </g>
      </g>
      <path d="M884 624L1668 341L2281 726" stroke="#1a1a1a" strokeWidth="1.500" fill="none" />
      <path d="M884 624L1465 1063L2281 726" stroke="#222" strokeWidth="1.500" fill="none" />
      <path d="M883 627L1466 1066L2283 729" stroke="#a0a0a0" strokeWidth="1" fill="none" strokeDasharray="6 3" />
      <path d="M884 624L883 628L1466 1068L2284 730L2281 726" stroke="#1a1a1a" strokeWidth="1.500" fill="none" />
    </g>
  );
}

function SurfacePlot() {
  const ticks = [4, 2, 0, -2, -4];
  return (
    <svg
      viewBox="760 92 1642 1222"
      preserveAspectRatio="xMidYMid meet"
      className="block h-full w-full"
      fontFamily="DejaVu Sans, sans-serif"
      fontSize="22"
      fill="#111"
    >
      <defs>
        <linearGradient id="legendBar" x1="0" x2="0" y1="0" y2="1">
          <stop offset="0" stopColor="#6e0000" />
          <stop offset="0.150" stopColor="#cc0000" />
          <stop offset="0.230" stopColor="#fa0000" />
          <stop offset="0.300" stopColor="#ff0000" />
          <stop offset="0.335" stopColor="#ff0020" />
          <stop offset="0.420" stopColor="#d67074" />
          <stop offset="0.507" stopColor="#b8baba" />
          <stop offset="0.596" stopColor="#7070d6" />
          <stop offset="0.685" stopColor="#2000ff" />
          <stop offset="0.760" stopColor="#0000ff" />
          <stop offset="0.860" stopColor="#0000cc" />
          <stop offset="1" stopColor="#00006a" />
        </linearGradient>
        <radialGradient id="logo" cx="0.300" cy="0.550" r="0.650">
          <stop offset="0" stopColor="#f8e83a" />
          <stop offset="0.300" stopColor="#d8e05a" />
          <stop offset="0.550" stopColor="#3ab0e0" />
          <stop offset="0.900" stopColor="#0a2c8c" />
        </radialGradient>
      </defs>
      <text x="784" y="140">Eigenfrequency=244.69 Hz</text>
      <text x="1372" y="140">Surface: Displacement magnitude (m)</text>
      <path d="M2357 120l36-12 8 28-22 12-14-3z" fill="#f6f4f3" stroke="#d8d6d6" strokeWidth="1.500" />
      <path d="M2367 117h21q6 0 6 6v9q0 6-6 6h-17l-4-5z" fill="url(#logo)" stroke="#16389c" strokeWidth="2" />

      <PlateSurface />

      <rect x="2292" y="212" width="23" height="1046" fill="url(#legendBar)" stroke="#2a2a2a" strokeWidth="2" />
      <text x="2315" y="195">
        ×10
        <tspan fontSize="20" dy="-9">-7</tspan>
      </text>
      {ticks.map((t) => {
        const y = 742 - t * 93.7;
        return (
          <g key={t}>
            <path d={`M2291 ${y}h4M2311 ${y}h4`} stroke="#000" strokeWidth="2" />
            <text x="2328" y={y + 8}>{t}</text>
          </g>
        );
      })}

      <path d="M829 1245V1218" stroke="#2a6cb4" strokeWidth="2" />
      <path d="M829 1208l5 12h-10z" fill="#2a6cb4" />
      <path d="M829 1245l-18-12" stroke="#1f9e28" strokeWidth="2" />
      <path d="M803 1228l12-1-3 9z" fill="#1f9e28" stroke="#1f9e28" />
      <path d="M829 1245l24-9" stroke="#e8004e" strokeWidth="2" />
      <path d="M866 1231l-14 9-2-7z" fill="#e8004e" />
      <text x="822" y="1202">z</text>
      <text x="788" y="1227">y</text>
      <text x="870" y="1233">x</text>
    </svg>
  );
}

function GraphicsPanel() {
  return (
    <section className="flex min-h-0 flex-1 flex-col border-b-2 border-l-2 border-[#8b8d8f] bg-[#f9fafe]">
      <div className="flex h-10 shrink-0 justify-between border-b-2 border-[#8b8d8f] pr-2.5">
        <div className="flex">
          <button type="button" className="-mb-0.5 flex h-10 items-start gap-3 bg-[#f9fafe] pl-1.5 leading-9">
            <GraphicsIcon />
            Graphics
          </button>
          <TabCurve fill="#f9fafe" />
          <button type="button" className="-ml-3.5 flex h-[38px] items-start gap-2.5 rounded-tr-lg border-r-2 border-[#8b8d8f] pr-2 leading-9">
            <GraphicsIcon />
            Convergence Plot 1
          </button>
        </div>
        <WindowButtons />
      </div>
      <div className="ml-1 flex h-[52px] shrink-0 border-b-2 border-[#cbccd0] pt-1">
        <ToolButton label="Zoom In"><Icon><g transform="translate(1 2)"><Lens sign="+" /></g></Icon></ToolButton>
        <ToolButton label="Zoom Out"><Icon><g transform="translate(1 2)"><Lens sign="-" /></g></Icon></ToolButton>
        <ToolButton label="Zoom Box"><ZoomBoxIcon /></ToolButton>
        <MenuArrow label="Zoom menu" />
        <ToolButton label="Zoom Extents"><ExtentsIcon /></ToolButton>
        <Divider />
        <ToolButton label="Default View"><AxesIcon /></ToolButton>
        <MenuArrow label="View menu" />
        <ToolButton label="XY View"><PlaneIcon label="xy" up={GREEN} right={CRIMSON} /></ToolButton>
        <ToolButton label="YZ View"><PlaneIcon label="yz" up={BLUE} right={GREEN} /></ToolButton>
        <ToolButton label="XZ View"><PlaneIcon label="xz" up={BLUE} right={CRIMSON} /></ToolButton>
        <ToolButton label="Scene Light"><TorchIcon /></ToolButton>
        <Divider />
        <ToolButton label="Rotate"><RotateIcon /></ToolButton>
        <MenuArrow label="Rotate menu" />
        <Divider />
        <ToolButton label="Clipping"><WireCubeIcon /></ToolButton>
        <MenuArrow label="Clipping menu" />
        <Divider />
        <ToolButton label="Light"><LightIcon /></ToolButton>
        <MenuArrow label="Light menu" />
        <ToolButton label="Transparency"><BoxIcon /></ToolButton>
        <MenuArrow label="Transparency menu" />
        <ToolButton label="Show Axes" pressed><AxesViewIcon /></ToolButton>
        <ToolButton label="Show Grid"><GridViewIcon /></ToolButton>
        <ToolButton label="Show Legends" pressed><LegendViewIcon /></ToolButton>
        <ToolButton label="Environment"><ApertureIcon /></ToolButton>
        <MenuArrow label="Environment menu" />
        <ToolButton label="Snapshot"><CameraIcon /></ToolButton>
        <ToolButton label="Print"><PrinterIcon /></ToolButton>
      </div>
      <div className="mb-1 ml-1 min-h-0 flex-1 bg-linear-to-b from-[#fafaff] via-[#ecf4fe] to-[#daecfe]">
        <SurfacePlot />
      </div>
    </section>
  );
}

const EIGEN_ROWS = [
  ['158.90', '998.42', '0.0000', 'Inf'],
  ['266.56', '1674.8', '0.0000', 'Inf'],
  ['374.12', '2350.7', '0.0000', 'Inf'],
  ['443.85', '2788.8', '0.0000', 'Inf'],
  ['473.56', '2975.5', '0.0000', 'Inf'],
  ['641.58', '4030.8', '0.0000', 'Inf'],
];

function ResultsPanel() {
  const [tab, setTab] = useState('eigen');
  const tabClass = 'flex h-[46px] items-center gap-2 rounded-tl-xl border-b-2 border-l-2 border-[#8b8d8f] pt-0.5 pr-2 pl-1.5';
  const notation = 'flex flex-col items-center font-[Roboto] text-[18px] leading-[18px] text-[#2b7cc9]';
  return (
    <section className="mt-2 mb-2 flex h-[332px] shrink-0 flex-col rounded-tl-xl border-t-2 border-b-2 border-[#8b8d8f] bg-[#f9fafe]">
      <div className="flex shrink-0">
        <div className="flex" role="tablist">
          <button type="button" role="tab" aria-selected={tab === 'messages'} onClick={() => setTab('messages')} className={tabClass}>
            <EnvelopeIcon />
            Messages
          </button>
          <button type="button" role="tab" aria-selected={tab === 'progress'} onClick={() => setTab('progress')} className={tabClass}>
            <ProgressIcon />
            Progress
          </button>
          <button type="button" role="tab" aria-selected={tab === 'log'} onClick={() => setTab('log')} className={tabClass}>
            <LogIcon />
            Log
          </button>
          <div className="flex h-[46px] items-center gap-2.5 rounded-tl-xl border-l-2 border-[#8b8d8f] pl-2">
            <PurpleTable />
            <button type="button" role="tab" aria-selected={tab === 'eigen'} onClick={() => setTab('eigen')} className="pt-0.5">
              Eigenfrequencies (Study 1)
            </button>
            <button type="button" aria-label="Close tab" className="ml-2">
              <svg width="24" height="24" viewBox="0 0 24 24" fill="none" aria-hidden="true">
                <path d="M4 3l16 18M20 3L4 21" stroke="#1a1a1a" strokeWidth="7" />
              </svg>
            </button>
          </div>
        </div>
        <div className="-ml-2 shrink-0">
          <TabCurve fill="#f9fafe" w={72} h={46} />
        </div>
        <div className="flex flex-1 justify-end border-b-2 border-[#8b8d8f] pt-1.5 pr-2.5">
          <WindowButtons />
        </div>
      </div>

      <div className="flex min-h-0 flex-1 flex-col border-l-2 border-[#8b8d8f]">
        <div className="ml-1 flex h-[52px] shrink-0 items-center border-b-2 border-[#cbccd0]">
          <ToolButton label="Full Precision"><DrawerIcon /></ToolButton>
          <Divider />
          <ToolButton><span className={notation}><span>8.85</span><span>e-12</span></span></ToolButton>
          <ToolButton pressed><span className="font-[Roboto] text-[13px] font-bold text-[#2b7cc9]">AUTO</span></ToolButton>
          <ToolButton><span className={notation}><span>8.5</span><span>e-1</span></span></ToolButton>
          <ToolButton><span className={notation}><span>850</span><span>e-3</span></span></ToolButton>
          <ToolButton><span className={notation}>0.85</span></ToolButton>
          <Divider />
          <ToolButton label="Table view" pressed><SheetIcon /></ToolButton>
          <ToolButton label="Polar view"><PolarIcon /></ToolButton>
          <Divider />
          <ToolButton label="Clear Table"><BroomIcon /></ToolButton>
          <ToolButton label="Delete Table"><TrashIcon /></ToolButton>
          <ToolButton label="Table Graph"><TablePlotIcon /></ToolButton>
          <ToolButton label="Table Surface"><Icon><path d="M1 1h30v30H1z" fill={PURPLE} /></Icon></ToolButton>
          <ToolButton label="Table Contour"><SwirlIcon /></ToolButton>
          <ToolButton label="Copy Table"><CopyTableIcon /></ToolButton>
          <ToolButton label="Export"><ExportIcon /></ToolButton>
          <ToolButton label="Display Table"><PurpleTable /></ToolButton>
          <MenuArrow label="Table menu" />
        </div>

        <div className="mt-1.5 mb-1 ml-1 flex min-h-0 flex-1 border-t-2 border-b-2 border-l-2 border-[#dedfe2]">
          <div className="min-w-0 flex-1 overflow-hidden bg-[#ebebeb]">
            <table className="w-full table-fixed border-separate border-spacing-0 text-left">
              <colgroup>
                <col className="w-[234px]" />
                <col className="w-[278px]" />
                <col className="w-[190px]" />
                <col className="w-[196px]" />
                <col />
              </colgroup>
              <thead>
                <tr className="h-14 bg-[#fbfbfb]">
                  {['Eigenfrequency (Hz)', 'Angular frequency (rad/s)', 'Damping ratio (1)', 'Quality factor (1)'].map((h, i) => (
                    <th key={h} scope="col" className="border-b-2 border-[#dbdbdd] p-0 font-normal whitespace-nowrap">
                      <div className={i ? 'flex h-8 items-center border-l-2 border-[#dbdbdd] pl-1' : 'flex h-8 items-center pl-1'}>{h}</div>
                    </th>
                  ))}
                  <td className="border-b-2 border-[#dbdbdd] p-0"><div className="h-8 border-l-2 border-[#dbdbdd]" /></td>
                </tr>
              </thead>
              <tbody>
                {EIGEN_ROWS.map((row) => (
                  <tr key={row[0]} className="h-[30px]">
                    {row.map((value, i) => (
                      <td key={i} className={i ? 'border-l-2 border-[#d0d0d2] p-0 pl-1 leading-7' : 'p-0 pl-4 leading-7'}>
                        <div className="pb-0.5">{value}</div>
                      </td>
                    ))}
                    <td className="border-l-2 border-[#d0d0d2]" />
                  </tr>
                ))}
              </tbody>
            </table>
          </div>
          <div className="w-[23px] shrink-0 overflow-hidden border-l-2 border-[#e4e5e8] bg-[#f9f9f9]">
            <div className="-ml-0.5 h-14 bg-white" />
            <div className="mt-2 ml-1 h-[46px] w-4 rounded-full bg-[#6a6a6a]" />
          </div>
        </div>
      </div>
    </section>
  );
}

export default function App() {
  return (
    <div className="flex h-screen gap-2 overflow-hidden bg-[#f7f8fd] font-[Inter,sans-serif] text-[22px] leading-[26px] text-black">
      <SettingsPanel />
      <main className="flex min-w-0 flex-1 flex-col">
        <GraphicsPanel />
        <ResultsPanel />
      </main>
    </div>
  );
}
